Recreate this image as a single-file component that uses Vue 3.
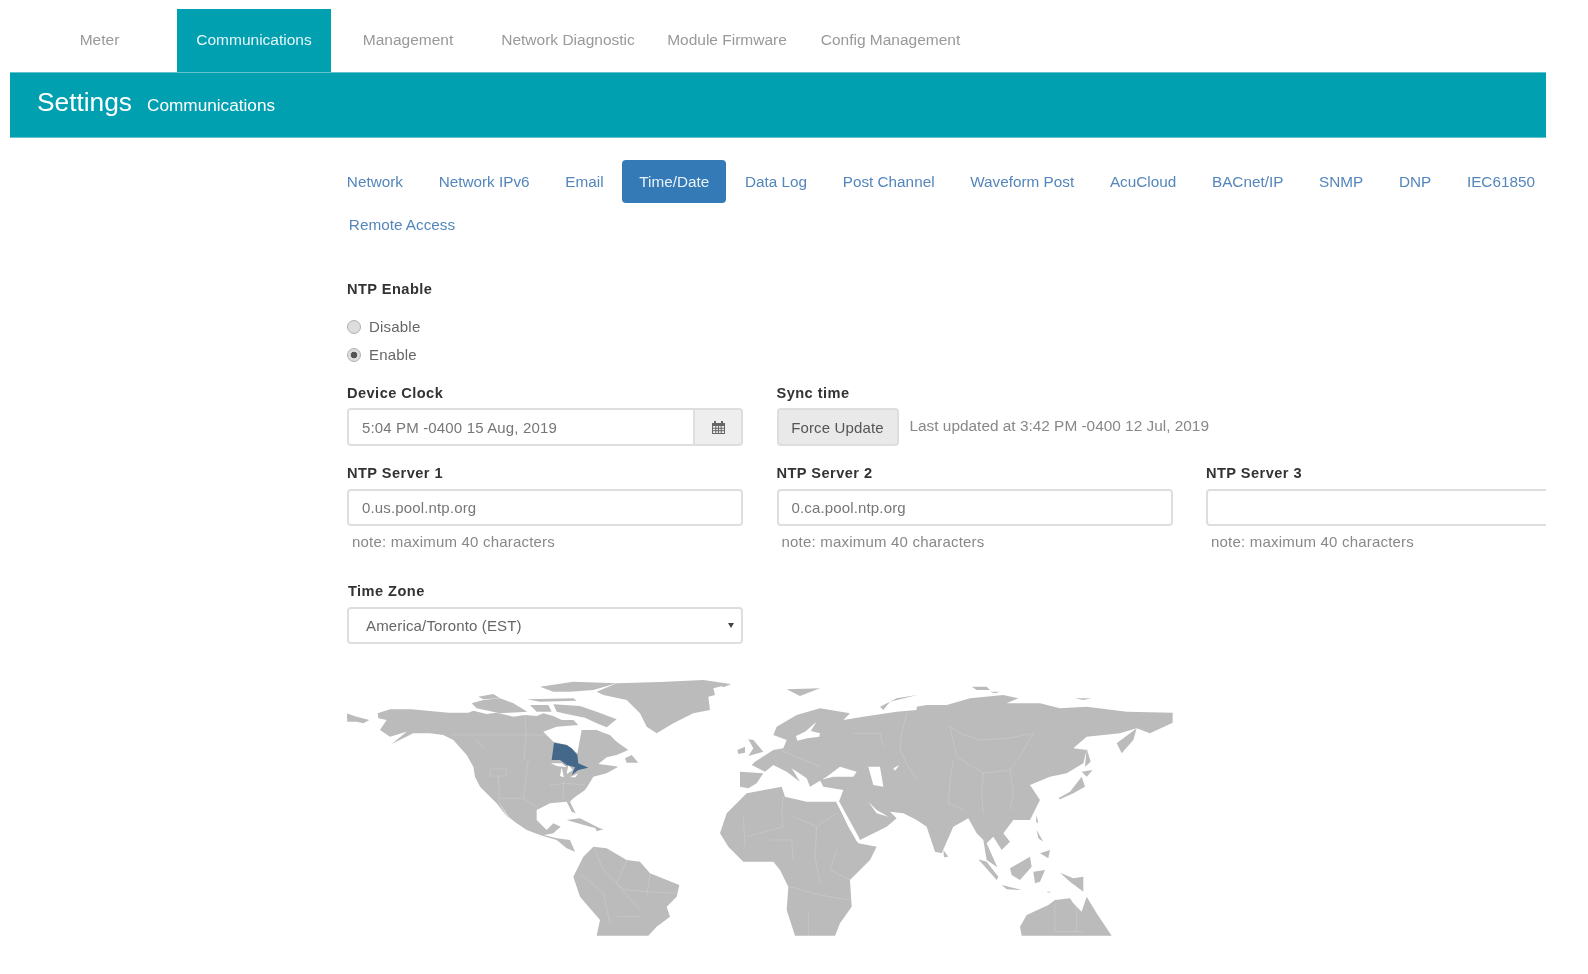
<template>
  <div class="page">
    <!-- Top tabs -->
    <nav class="top-nav">
      <a
        v-for="item in topItems"
        :key="item.name"
        class="top-item"
        :class="{ 'top-item--active': item.name === 'Communications' }"
        :style="{ width: item.width + 'px' }"
      >{{ item.name }}</a>
    </nav>

    <!-- Title bar -->
    <header class="title-bar">
      <h1 class="title">Settings</h1>
      <span class="subtitle">Communications</span>
    </header>

    <main class="content">
      <!-- Sub tabs -->
      <nav class="sub-nav">
        <a
          v-for="tab in subTabs"
          :key="tab"
          class="sub-item"
          :class="{ 'sub-item--active': tab === 'Time/Date', 'sub-item--wrap': tab === 'Remote Access' }"
        >{{ tab }}</a>
      </nav>

      <form class="form">
        <div class="label ntp-label">NTP Enable</div>
        <div class="radios">
          <label class="radio"><input type="radio" name="ntp" /> Disable</label>
          <label class="radio"><input type="radio" name="ntp" checked /> Enable</label>
        </div>

        <div class="grid grid--clock">
          <div>
            <div class="label">Device Clock</div>
            <div class="input-group">
              <div class="field field--group">5:04 PM -0400 15 Aug, 2019</div>
              <div class="addon">
                <svg width="15" height="15" viewBox="0 0 15 15" aria-hidden="true">
                  <path fill="#666" d="M1 3h2V1h2v2h5V1h2v2h2v11H1zM2 6v7h11V6z" />
                  <path stroke="#666" stroke-width="1" fill="none" d="M2 8.300h11M2 10.700h11M4.800 6v7M7.500 6v7M10.200 6v7" />
                </svg>
              </div>
            </div>
          </div>
          <div>
            <div class="label">Sync time</div>
            <div class="sync-row">
              <button type="button" class="btn">Force Update</button>
              <span class="sync-note">Last updated at 3:42 PM -0400 12 Jul, 2019</span>
            </div>
          </div>
        </div>

        <div class="grid grid--servers">
          <div v-for="server in servers" :key="server.name">
            <div class="label">{{ server.name }}</div>
            <div class="field field--server">{{ server.value }}</div>
            <div class="note">note: maximum 40 characters</div>
          </div>
        </div>

        <div class="label tz-label">Time Zone</div>
        <div class="select">
          <span>America/Toronto (EST)</span>
          <i class="caret"></i>
        </div>

        <!-- World map, drawn in page coordinates -->
        <svg class="map" width="826" height="258" viewBox="347 678 826 258" aria-label="World map">
          <g transform="translate(340 670) scale(0.33333)">
            <g fill="#bbb">
              <polygon points="20,130 50,140 88,150 70,160 50,155 22,155" />
              <polygon points="113,130 150,118 215,118 325,128 385,128 400,122 440,132 470,128 520,140 555,135 590,138 610,130 640,138 665,150 700,150 715,165 650,170 610,185 640,215 680,225 712,250 725,180 770,180 790,188 810,195 830,215 865,240 830,255 800,262 775,282 800,285 835,290 800,310 760,320 745,345 735,360 700,385 690,395 707,430 695,425 680,395 630,400 590,420 590,450 620,480 640,460 662,470 640,490 612,495 650,505 690,510 705,545 680,535 650,510 600,495 560,480 530,460 505,440 470,385 505,445 470,400 450,380 420,350 405,320 400,290 380,255 340,210 310,195 270,190 220,190 155,222 200,185 150,200 120,180 140,150 115,145" />
              <polygon points="770,65 830,40 960,36 1090,30 1172,42 1120,55 1125,75 1105,80 1110,120 1060,130 1000,160 950,190 920,170 900,130 860,90 790,75" />
              <polygon points="600,50 700,35 830,40 760,60 690,65 640,65" />
              <polygon points="395,100 430,90 480,85 520,100 562,125 480,130 410,115" />
              <polygon points="415,80 460,72 480,85 430,88" />
              <polygon points="560,88 700,85 710,92 600,95" />
              <polygon points="640,103 720,108 770,125 830,148 800,172 770,160 735,143 680,132 650,125" />
              <polygon points="570,105 625,105 635,125 590,125" />
              <polygon points="855,265 875,255 895,278 860,278" />
              <polygon points="680,450 720,445 760,465 790,480 750,470" />
              <polygon points="765,472 790,478 770,484" />
              <polygon points="700,620 730,560 760,530 800,535 860,570 900,575 930,610 1018,645 1010,680 980,710 990,740 950,770 925,797 770,797 780,750 720,680" />
            </g>
            <g fill="#fff">
              <polygon points="632,280 665,280 680,292 650,288" />
              <polygon points="665,292 672,322 660,318" />
              <polygon points="685,285 698,300 680,312" />
              <polygon points="690,322 715,310 706,322" />
            </g>
            <polygon
              fill="#44688a"
              points="642,218 680,225 695,235 712,255 715,280 745,293 715,300 695,315 705,292 680,285 660,270 635,270"
            />
            <path
              class="borders"
              d="M330,195H630M555,135L558,200L552,270M410,210L430,235M450,297H500V318H450zM475,318L478,385H550L565,270M550,385L590,410M672,330L668,390M630,345L680,340L735,345M760,530L790,600L850,660L1010,670M720,610L790,670L810,760M860,570L830,640L900,720M930,610L920,680M830,740H900"
            />
          </g>

          <g transform="translate(720 670) scale(0.33333)">
            <g fill="#bbb">
              <polygon points="0,490 20,430 80,370 185,350 195,380 260,395 350,395 385,470 415,520 470,530 450,570 390,630 395,710 360,760 345,797 225,797 200,720 205,650 180,600 160,575 70,575 25,530" />
              <polygon points="105,275 160,240 190,235 200,210 160,195 170,170 230,135 300,115 390,130 370,150 430,140 530,125 590,120 590,110 620,105 680,105 750,85 850,75 895,85 860,100 960,100 1020,115 1100,110 1220,125 1358,128 1358,158 1290,190 1250,175 1200,190 1100,200 1060,235 1100,240 1090,280 1040,310 990,320 930,345 960,390 930,450 880,450 850,490 870,515 845,540 820,500 800,520 832,592 800,570 790,510 770,490 745,445 700,470 665,550 645,545 620,470 590,450 550,430 510,425 530,445 500,470 420,510 380,440 355,400 370,360 310,350 300,330 340,320 400,320 410,305 360,290 320,320 270,350 260,325 215,295 240,335 200,305 160,285 135,305 95,285" />
              <polygon points="60,305 130,310 110,340 85,355 60,350" />
              <polygon points="85,208 100,210 130,245 85,258 100,235" />
              <polygon points="52,240 75,230 75,248 55,252" />
              <polygon points="200,58 300,55 240,78" />
              <polygon points="0,45 35,42 10,52" />
              <polygon points="480,110 530,85 592,75 510,95 490,120" />
              <polygon points="755,50 800,50 810,60 770,60" />
              <polygon points="810,65 840,65 825,70" />
              <polygon points="1065,85 1115,85 1090,90" />
              <polygon points="1015,385 1050,365 1085,320 1095,350 1060,370 1020,388" />
              <polygon points="1085,305 1118,300 1100,320" />
              <polygon points="1100,235 1112,275 1095,290" />
              <polygon points="1190,220 1250,175 1240,210 1205,250" />
              <polygon points="950,480 970,515 955,505" />
              <polygon points="960,550 990,540 985,565" />
              <polygon points="950,435 955,460 948,455" />
              <polygon points="670,540 685,560 672,562" />
              <polygon points="775,568 800,575 835,620 830,630" />
              <polygon points="845,645 905,660 860,658" />
              <polygon points="870,595 930,560 935,590 900,630 875,615" />
              <polygon points="940,605 975,600 960,635 945,640" />
              <polygon points="1020,608 1060,625 1090,620 1090,665 1050,635" />
              <polygon points="900,770 920,735 985,705 1005,690 1050,685 1060,700 1085,725 1100,680 1130,730 1175,797 905,797" />
              <polygon points="980,665 995,665 985,668" />
            </g>
            <g fill="#fff">
              <polygon points="445,290 480,290 490,350 460,345" />
              <polygon points="445,395 470,420 505,440 470,430" />
              <polygon points="255,185 290,155 272,183 300,190 298,200 262,205 232,212 228,198" />
              <polygon points="348,395 358,395 418,505 410,514" />
              <polygon points="520,295 538,285 525,302" />
            </g>
            <path
              class="borders"
              d="M560,130L545,190L540,240L565,290L590,330M690,170L700,215L710,260L750,285L790,310L870,300L905,250L940,190L860,205L780,210L730,195L690,170M700,270L690,335L685,400L730,420M790,310L785,370L790,430M870,300L880,365L870,420M180,240L240,265L300,290M400,190L480,190L490,230M190,380L185,425L190,470L80,500M220,440L290,470L350,430M150,510H215L220,570M290,470L285,560L300,640M350,540L330,600L390,630M210,650L300,675L390,690M265,730V797M70,440L75,530M1005,700V785H1090M1070,690V785"
            />
          </g>
        </svg>
      </form>
    </main>
  </div>
</template>

<script setup>
const topItems = [
  { name: 'Meter', width: 167 },
  { name: 'Communications', width: 154 },
  { name: 'Management', width: 154 },
  { name: 'Network Diagnostic', width: 166 },
  { name: 'Module Firmware', width: 152 },
  { name: 'Config Management', width: 175 },
]

const subTabs = [
  'Network',
  'Network IPv6',
  'Email',
  'Time/Date',
  'Data Log',
  'Post Channel',
  'Waveform Post',
  'AcuCloud',
  'BACnet/IP',
  'SNMP',
  'DNP',
  'IEC61850',
  'Remote Access',
]

const servers = [
  { name: 'NTP Server 1', value: '0.us.pool.ntp.org' },
  { name: 'NTP Server 2', value: '0.ca.pool.ntp.org' },
  { name: 'NTP Server 3', value: '' },
]
</script>

<style scoped>
.page {
  width: 1536px;
  margin-left: 10px;
  padding-top: 9px;
  overflow: hidden;
  font-family: 'Liberation Sans', Arial, sans-serif;
  color: #555;
  filter: blur(0.35px);
}

/* Top tabs */
.top-nav {
  display: flex;
  height: 63px;
}

.top-item {
  flex-shrink: 0;
  display: flex;
  align-items: center;
  justify-content: center;
  padding-bottom: 2px;
  box-sizing: border-box;
  font-size: 15.5px;
  color: #999;
}

.top-item:first-child {
  padding-left: 12px;
}

.top-item--active {
  background: #01a0b1;
  color: #e6f6f8;
}

/* Title bar */
.title-bar {
  display: flex;
  align-items: baseline;
  gap: 15px;
  box-sizing: border-box;
  height: 66px;
  padding: 13px 0 0 27px;
  background: #01a0b1;
  border-top: 1px solid #63c4cf;
  border-bottom: 1px solid #63c4cf;
  color: #fff;
}

.title {
  margin: 0;
  font-size: 26.3px;
  font-weight: 400;
  line-height: 32px;
}

.subtitle {
  font-size: 17.2px;
}

/* Sub tabs */
.content {
  margin-left: 320px;
}

.sub-nav {
  display: flex;
  flex-wrap: wrap;
  width: 1240px;
  margin-top: 22px;
  gap: 0 2px;
}

.sub-item {
  flex-shrink: 0;
  box-sizing: border-box;
  height: 43px;
  padding: 0 16.85px;
  display: flex;
  align-items: center;
  border-radius: 4px;
  font-size: 15.3px;
  color: #5486bb;
}

.sub-item--active {
  background: #337ab7;
  color: #eaf2f8;
}

.sub-item--wrap {
  margin-left: 2px;
}

/* Form */
.form {
  margin-left: 17px;
}

.label {
  height: 20px;
  font-size: 14.6px;
  line-height: 20px;
  font-weight: 700;
  letter-spacing: 0.45px;
  color: #333;
}

.ntp-label {
  margin-top: 33px;
}

.radios {
  margin-top: 17px;
  display: flex;
  flex-direction: column;
  gap: 8px;
}

.radio {
  display: flex;
  align-items: center;
  gap: 8px;
  height: 20px;
  font-size: 15px;
  letter-spacing: 0.2px;
  color: #666;
}

.radio input {
  appearance: none;
  width: 14px;
  height: 14px;
  margin: 1px 0 0;
  border-radius: 50%;
  border: 1px solid #b0b0b0;
  background: #ddd;
}

.radio input:checked {
  background: radial-gradient(circle, #555 0, #555 3px, #ddd 3.6px);
}

.grid {
  display: grid;
  grid-template-columns: repeat(3, 396px);
  column-gap: 33.5px;
}

.grid--clock {
  margin-top: 19px;
}

.grid--servers {
  margin-top: 17px;
}

.field {
  box-sizing: border-box;
  height: 38px;
  padding: 0 13px;
  display: flex;
  align-items: center;
  background: #fff;
  border: 2px solid #dedede;
  border-radius: 4px;
  font-size: 15px;
  letter-spacing: 0.15px;
  color: #777;
}

.input-group {
  display: flex;
  margin-top: 5px;
}

.field--group {
  flex: 1;
  border-radius: 4px 0 0 4px;
}

.field--server {
  height: 37px;
  margin-top: 6px;
}

.addon {
  width: 48px;
  height: 38px;
  box-sizing: border-box;
  display: flex;
  align-items: center;
  justify-content: center;
  background: #eee;
  border: 2px solid #dedede;
  border-left: none;
  border-radius: 0 4px 4px 0;
}

.sync-row {
  display: flex;
  align-items: center;
  gap: 11px;
  margin-top: 5px;
}

.btn {
  flex-shrink: 0;
  height: 38px;
  width: 122px;
  padding: 0;
  background: #e9e9e9;
  border: 2px solid #dedede;
  border-radius: 4px;
  font-family: inherit;
  font-size: 15px;
  letter-spacing: 0.15px;
  color: #555;
}

.sync-note {
  font-size: 15.4px;
  color: #888;
  margin-bottom: 2px;
  white-space: nowrap;
}

.note {
  margin: 6px 0 0 5px;
  height: 20px;
  line-height: 20px;
  font-size: 15px;
  letter-spacing: 0.2px;
  color: #888;
}

.tz-label {
  margin: 29px 0 0 1px;
}

.select {
  box-sizing: border-box;
  position: relative;
  width: 396px;
  height: 37px;
  margin-top: 6px;
  padding-left: 17px;
  display: flex;
  align-items: center;
  border: 2px solid #dedede;
  border-radius: 4px;
  font-size: 15px;
  letter-spacing: 0.15px;
  color: #666;
}

.caret {
  position: absolute;
  right: 7px;
  top: 14px;
  border-left: 3px solid transparent;
  border-right: 3px solid transparent;
  border-top: 5px solid #444;
}

.map {
  display: block;
  margin-top: 34px;
}

.borders {
  fill: none;
  stroke: #fff;
  stroke-width: 1.5;
  stroke-opacity: 0.3;
}
</style>
